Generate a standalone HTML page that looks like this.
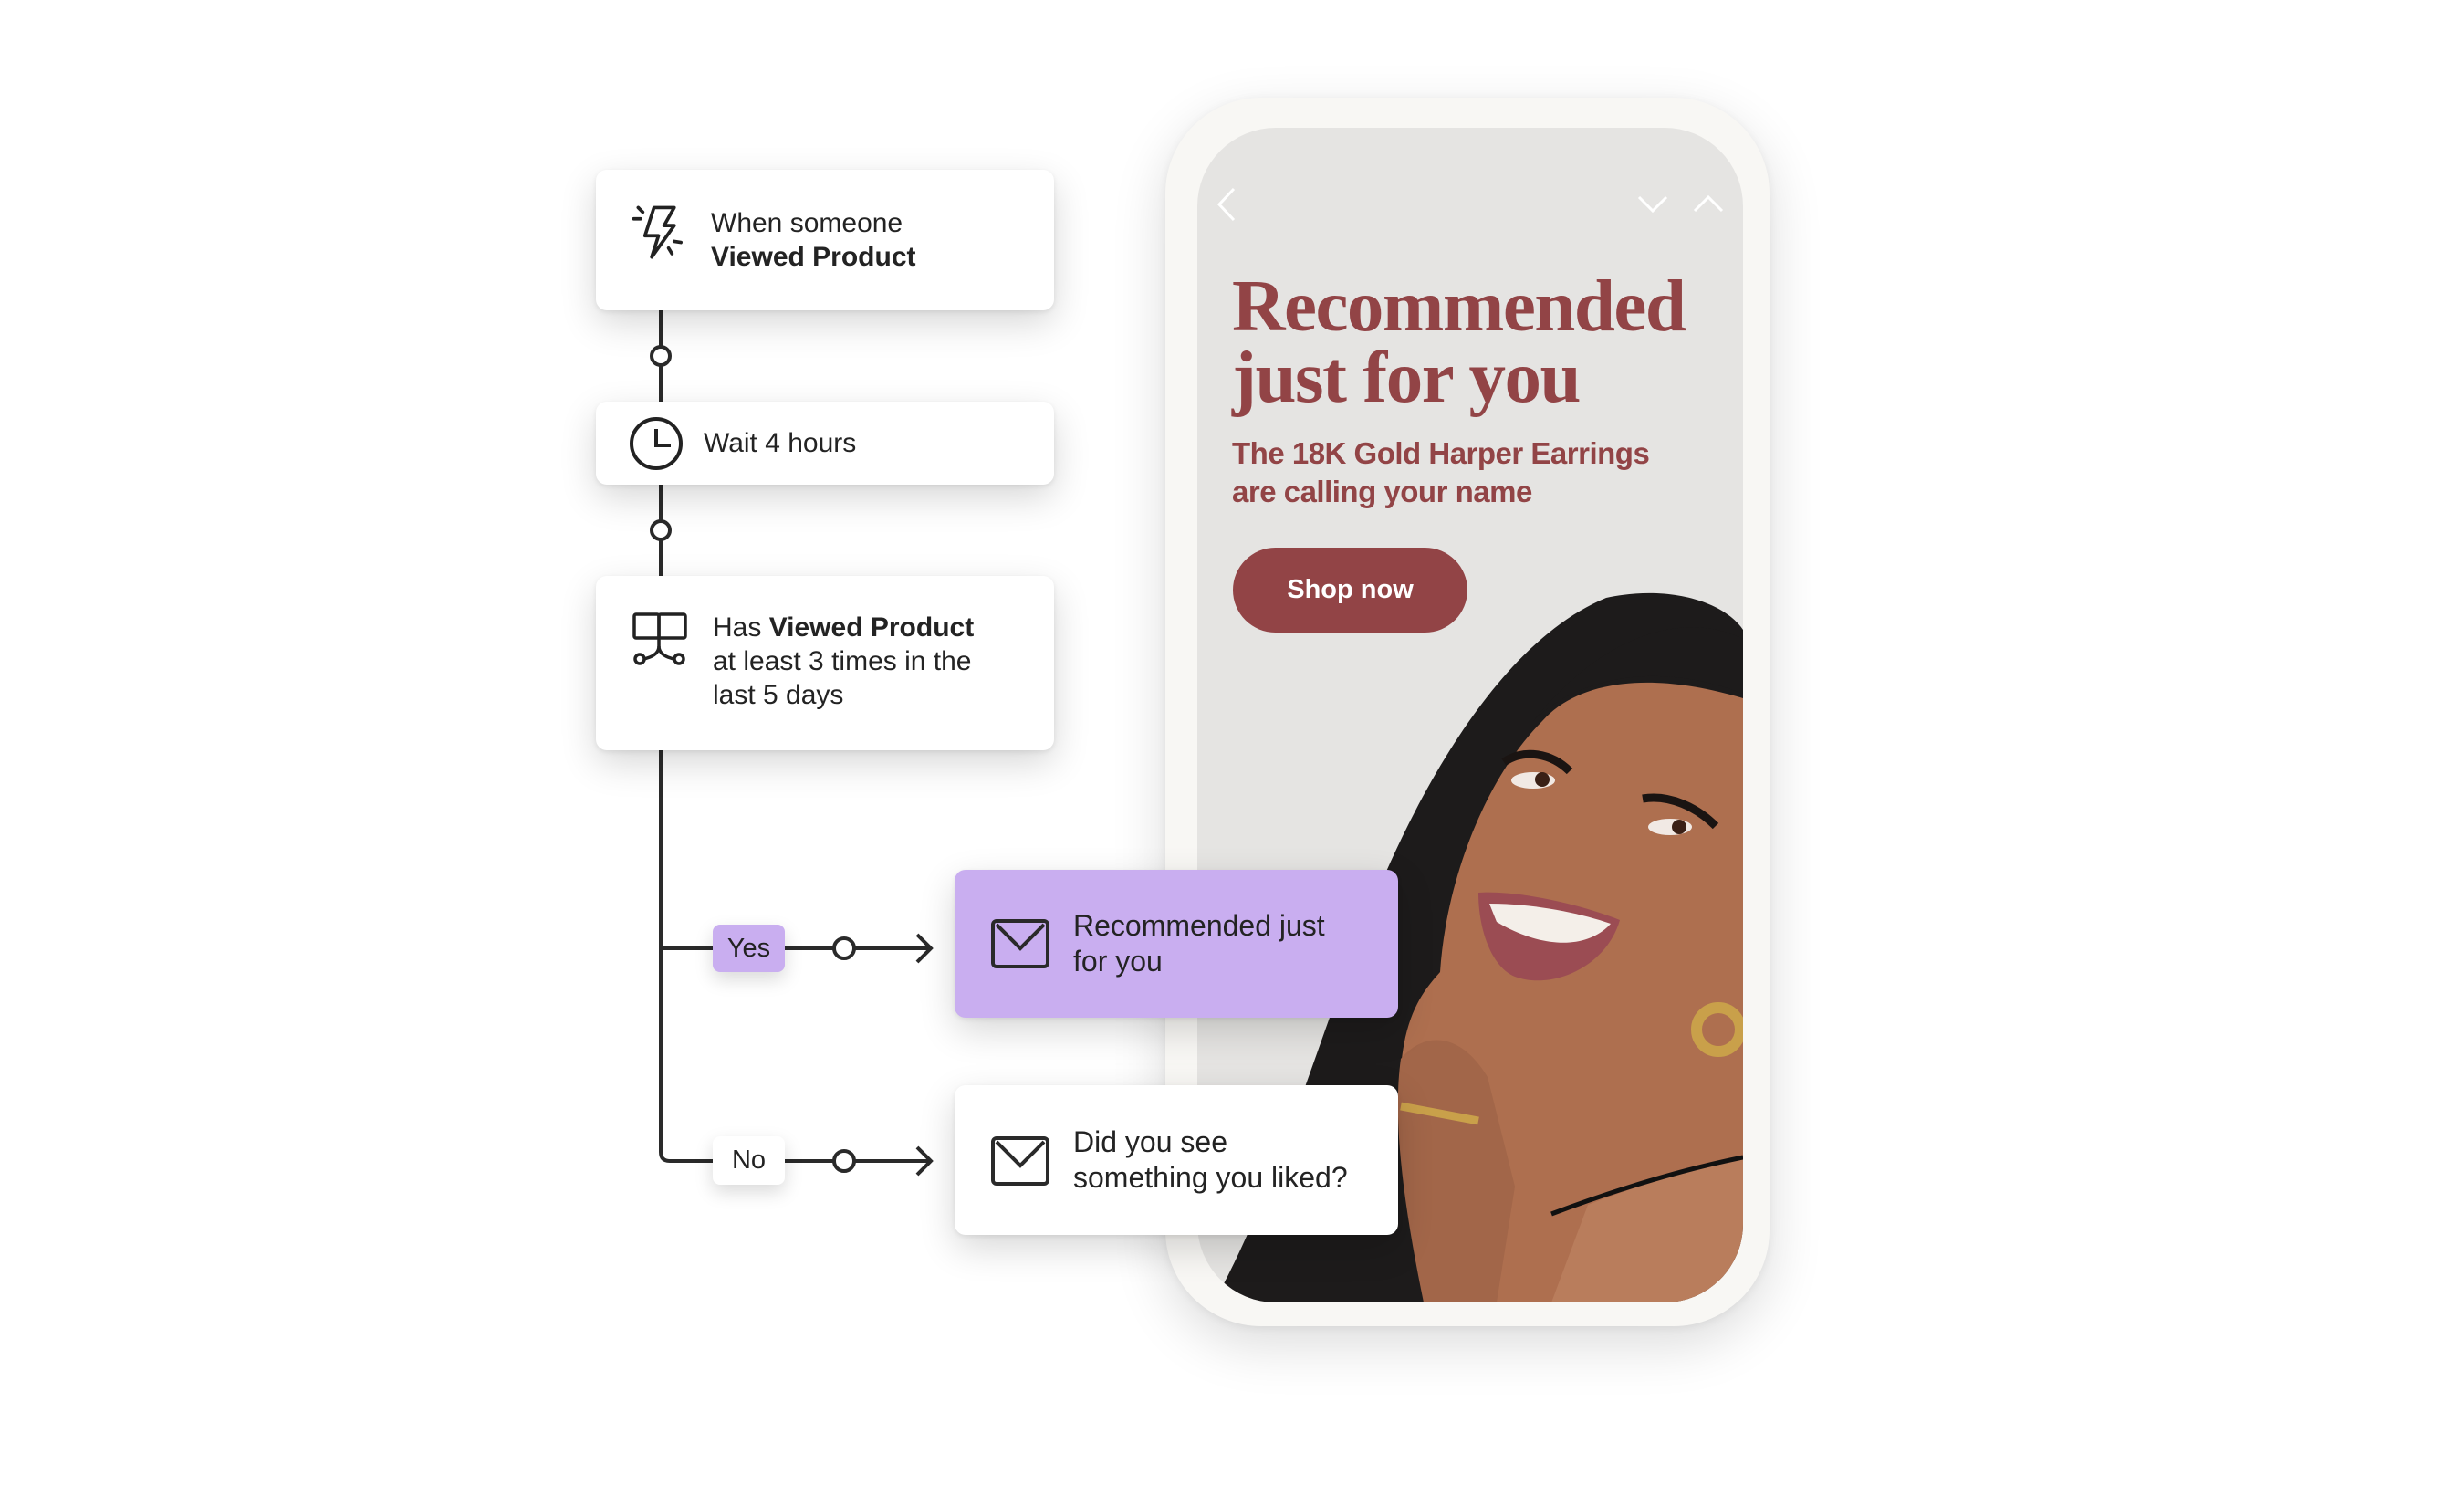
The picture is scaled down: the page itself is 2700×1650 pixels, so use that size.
<!DOCTYPE html>
<html><head><meta charset="utf-8"><style>
*{margin:0;padding:0;box-sizing:border-box}
body{width:2700px;height:1650px;background:#fff;position:relative;overflow:hidden;font-family:"Liberation Sans",sans-serif;color:#222}
.card{position:absolute;background:#fff;border-radius:12px;box-shadow:0 14px 40px rgba(0,0,0,.16),0 2px 6px rgba(0,0,0,.08)}
.t{position:absolute;font-size:30px;line-height:37px;color:#232323}
.phone{position:absolute;left:1277px;top:107px;width:662px;height:1346px;border-radius:105px;background:#f8f7f4;box-shadow:0 20px 60px rgba(0,0,0,.14),0 2px 10px rgba(0,0,0,.06)}
.screen{position:absolute;left:1312px;top:140px;width:598px;height:1287px;border-radius:86px;background:#e5e4e2;overflow:hidden}
.badge{position:absolute;border-radius:8px;font-size:29px;text-align:center;box-shadow:0 8px 20px rgba(0,0,0,.15)}
</style></head><body>

<div class="phone"></div>
<div class="screen">
<svg width="598" height="1287" viewBox="1312 140 598 1287" style="position:absolute;left:0;top:0">
 <polyline points="1352,207 1336,224 1352,241" fill="none" stroke="#fff" stroke-width="3"/>
 <polyline points="1796,216 1811,231 1826,216" fill="none" stroke="#fff" stroke-width="3"/>
 <polyline points="1857,231 1872,216 1887,231" fill="none" stroke="#fff" stroke-width="3"/>
 <path d="M1330,1427 C1400,1300 1440,1150 1500,1000 C1560,850 1650,700 1760,655 C1830,640 1890,660 1910,690 L1910,1427 Z" fill="#1d1b1b"/>
 <path d="M1690,790 C1730,745 1810,735 1910,765 L1910,1427 L1600,1427 C1570,1350 1540,1260 1535,1170 C1540,1110 1560,1085 1578,1065 C1585,960 1630,850 1690,790 Z" fill="#ae6f4f"/>
 <path d="M1680,790 C1730,740 1820,725 1910,760 L1910,700 C1850,670 1760,690 1680,790 Z" fill="#1d1b1b"/>
 <path d="M1740,1320 C1790,1300 1860,1280 1910,1270 L1910,1427 L1700,1427 Z" fill="#b97d5c"/>
 <path d="M1700,1330 C1780,1300 1850,1280 1910,1268" fill="none" stroke="#111" stroke-width="5"/>
 <path d="M1648,835 C1670,820 1700,825 1720,845" fill="none" stroke="#1a1412" stroke-width="9"/>
 <path d="M1800,875 C1830,870 1860,885 1880,905" fill="none" stroke="#1a1412" stroke-width="9"/>
 <ellipse cx="1680" cy="855" rx="24" ry="9" fill="#f1e9e4"/><circle cx="1690" cy="854" r="8" fill="#3a2016"/>
 <ellipse cx="1830" cy="906" rx="24" ry="9" fill="#f1e9e4"/><circle cx="1840" cy="906" r="8" fill="#3a2016"/>
 <path d="M1620,978 C1660,975 1730,990 1775,1008 C1760,1060 1700,1085 1660,1070 C1635,1060 1620,1020 1620,978 Z" fill="#9b4c53"/>
 <path d="M1632,990 C1680,990 1730,1000 1765,1012 C1740,1040 1690,1040 1640,1010 Z" fill="#f4efe9"/>
 <circle cx="1883" cy="1128" r="24" fill="none" stroke="#c9a04a" stroke-width="12"/>
 <path d="M1535,1160 C1560,1130 1600,1130 1630,1180 L1660,1300 L1640,1427 L1560,1427 C1540,1330 1525,1230 1535,1160 Z" fill="#a26649"/>
 <path d="M1535,1212 L1620,1228" stroke="#c9a04a" stroke-width="9"/>
</svg>
<div style="position:absolute;left:38px;top:156px;font-family:'Liberation Serif',serif;font-weight:bold;font-size:81px;line-height:78px;color:#924446;letter-spacing:-1.5px">Recommended<br>just for you</div>
<div style="position:absolute;left:38px;top:336px;font-size:33px;line-height:42px;color:#924446;font-weight:bold;letter-spacing:-.5px">The 18K Gold Harper Earrings<br>are calling your name</div>
<div style="position:absolute;left:39px;top:460px;width:257px;height:93px;border-radius:47px;background:#924446;color:#fff;font-weight:bold;font-size:29px;line-height:93px;text-align:center">Shop now</div>
</div>

<svg width="2700" height="1650" style="position:absolute;left:0;top:0" fill="none" stroke="#2a2a2a" stroke-width="4">
 <line x1="724" y1="340" x2="724" y2="440"/>
 <line x1="724" y1="531" x2="724" y2="631"/>
 <path d="M724,822 L724,1262 Q724,1272 734,1272 L781,1272"/>
 <line x1="724" y1="1039" x2="781" y2="1039"/>
 <line x1="860" y1="1039" x2="1018" y2="1039"/><polyline points="1005,1024 1020,1039 1005,1054"/>
 <line x1="860" y1="1272" x2="1018" y2="1272"/><polyline points="1005,1257 1020,1272 1005,1287"/>
 <circle cx="724" cy="390" r="10" fill="#fff"/>
 <circle cx="724" cy="581" r="10" fill="#fff"/>
 <circle cx="925" cy="1039" r="11" fill="#fff"/>
 <circle cx="925" cy="1272" r="11" fill="#fff"/>
</svg>

<div class="card" style="left:653px;top:186px;width:502px;height:154px"></div>
<svg style="position:absolute;left:692px;top:220px" width="64" height="74" viewBox="0 0 52 60" fill="none" stroke="#222" stroke-width="3" stroke-linejoin="round" stroke-linecap="round">
 <path d="M20,6 L38,6 L29,22 L38,22 L18,50 L24,31 L12,31 Z"/>
 <line x1="2" y1="16" x2="8" y2="16"/><line x1="6" y1="6" x2="10" y2="10"/>
 <line x1="38" y1="36" x2="44" y2="37"/><line x1="33" y1="42" x2="36" y2="47"/>
</svg>
<div class="t" style="left:779px;top:226px">When someone<br><b>Viewed Product</b></div>

<div class="card" style="left:653px;top:440px;width:502px;height:91px"></div>
<svg style="position:absolute;left:689px;top:456px" width="60" height="60" fill="none" stroke="#222" stroke-width="4"><circle cx="30" cy="30" r="27"/><polyline points="30,14 30,32 46,32"/></svg>
<div class="t" style="left:771px;top:467px">Wait 4 hours</div>

<div class="card" style="left:653px;top:631px;width:502px;height:191px"></div>
<svg style="position:absolute;left:692px;top:670px" width="64" height="64" viewBox="0 0 64 64" fill="none" stroke="#222" stroke-width="3.5">
 <rect x="3" y="3" width="27" height="26" rx="2"/><rect x="30" y="3" width="29" height="26" rx="2"/>
 <path d="M30,29 L30,38 Q30,46 20,50 L14,52"/><path d="M30,38 Q30,46 40,50 L46,52"/>
 <circle cx="9" cy="52" r="5"/><circle cx="52" cy="52" r="5"/>
</svg>
<div class="t" style="left:781px;top:669px">Has <b>Viewed Product</b><br>at least 3 times in the<br>last 5 days</div>

<div class="badge" style="left:781px;top:1013px;width:79px;height:52px;background:#c9aef0;line-height:52px">Yes</div>
<div class="badge" style="left:781px;top:1245px;width:79px;height:53px;background:#fff;line-height:53px">No</div>

<div class="card" style="left:1046px;top:953px;width:486px;height:162px;background:#c9aef0"></div>
<svg style="position:absolute;left:1085px;top:1006px" width="66" height="56" fill="none" stroke="#2a2a2a" stroke-width="4"><rect x="3" y="3" width="60" height="50" rx="4"/><polyline points="7,7 33,33 59,7"/></svg>
<div class="t" style="left:1176px;top:995px;font-size:32px;line-height:39px">Recommended just<br>for you</div>

<div class="card" style="left:1046px;top:1189px;width:486px;height:164px"></div>
<svg style="position:absolute;left:1085px;top:1244px" width="66" height="56" fill="none" stroke="#2a2a2a" stroke-width="4"><rect x="3" y="3" width="60" height="50" rx="4"/><polyline points="7,7 33,33 59,7"/></svg>
<div class="t" style="left:1176px;top:1232px;font-size:32px;line-height:39px">Did you see<br>something you liked?</div>

</body></html>
